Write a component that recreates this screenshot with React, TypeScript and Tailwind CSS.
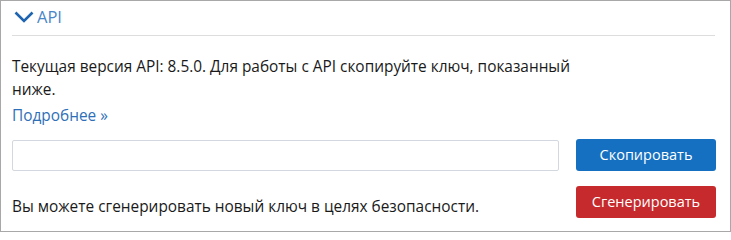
export default function App() {
  return (
    <div
      className="w-[731px] h-[232px] border border-[#a8a8a8] bg-white pl-[11px] pr-[15px] text-[#1a1a1a]"
      style={{ fontFamily: '"Open Sans", "Noto Sans", sans-serif' }}
    >
      {/* Header */}
      <div className="h-[35px] flex items-center gap-[3px] border-b border-[#dddddd]">
        <svg width="20" height="12" viewBox="0 0 20 12" className="ml-[2px] mt-[-2px]">
          <path d="M1.5 1.5 L10 10 L18.5 1.5" fill="none" stroke="#1e64b0" strokeWidth="2.6" />
        </svg>
        <span className="text-[16.5px] text-[#4a86c8] mt-[-2px]">API</span>
      </div>

      {/* Body */}
      <p className="mt-[19px] w-[575px] text-[15.4px] leading-[23px]">
        Текущая версия API: 8.5.0. Для работы с API скопируйте ключ, показанный ниже.
      </p>
      <a href="#" className="block mt-[3px] text-[15.4px] leading-[23px] text-[#2f6fb8]">
        Подробнее »
      </a>

      <div className="mt-[12px] grid grid-cols-[547px_140px] gap-x-[17px] gap-y-[14px] items-center">
        <input
          type="text"
          className="h-[31px] border border-[#d3d8e0] rounded-[2px] outline-none px-2"
        />
        <button className="h-[32px] rounded-[3px] bg-[#1570c1] text-white text-[14.5px]">
          Скопировать
        </button>
        <span className="text-[15.4px] leading-[23px] mt-[10px]">
          Вы можете сгенерировать новый ключ в целях безопасности.
        </span>
        <button className="h-[32px] rounded-[3px] bg-[#c62a2c] text-white text-[14.5px]">
          Сгенерировать
        </button>
      </div>
    </div>
  );
}
